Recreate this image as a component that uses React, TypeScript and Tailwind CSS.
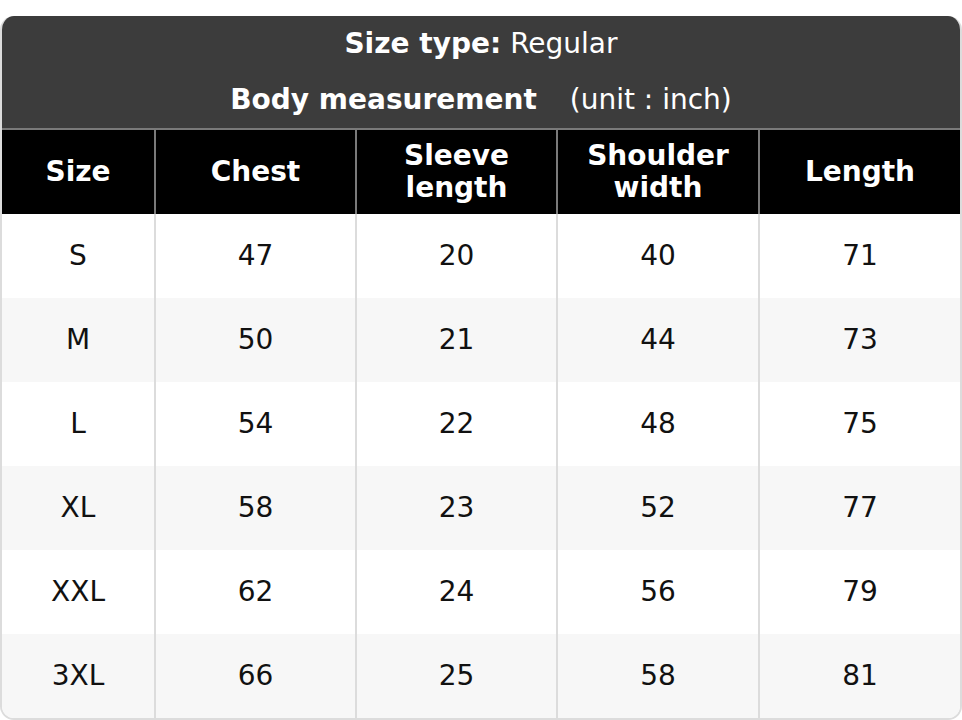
import React from "react";

const rows = [
  ["S", "47", "20", "40", "71"],
  ["M", "50", "21", "44", "73"],
  ["L", "54", "22", "48", "75"],
  ["XL", "58", "23", "52", "77"],
  ["XXL", "62", "24", "56", "79"],
  ["3XL", "66", "25", "58", "81"],
];

const widths = ["w-[152px]", "w-[201px]", "w-[201px]", "w-[202px]", "flex-1"];

export default function App() {
  return (
    <div
      className="w-[962px] h-[720px] bg-white pt-4"
      style={{ fontFamily: '"DejaVu Sans", Verdana, sans-serif' }}
    >
      <div className="rounded-[14px] overflow-hidden border-x-2 border-b-2 border-[#dcdcdc]">
        <div className="h-[112px] bg-[#3c3c3c] text-white text-[28px] flex flex-col items-center">
          <div className="h-[56px] flex items-center">
            <span className="font-bold">Size type:</span>
            <span className="ml-[9px]">Regular</span>
          </div>
          <div className="h-[56px] flex items-center">
            <span className="font-bold">Body measurement</span>
            <span className="ml-[33px]">(unit : inch)</span>
          </div>
        </div>
        <div className="h-[2px] bg-[#7a7a7a]" />
        <div className="flex h-[84px] bg-black text-white font-bold text-[28px] leading-[32px] text-center">
          {[["Size"], ["Chest"], ["Sleeve", "length"], ["Shoulder", "width"], ["Length"]].map(
            (h, i) => (
              <div
                key={i}
                className={`${widths[i]} flex flex-col items-center justify-center ${
                  i > 0 ? "border-l-2 border-[#7a7a7a]" : ""
                }`}
              >
                {h.map((t) => (
                  <div key={t}>{t}</div>
                ))}
              </div>
            )
          )}
        </div>
        {rows.map((r, ri) => (
          <div
            key={ri}
            className={`flex h-[84px] text-[28px] text-[#111] ${
              ri % 2 === 1 ? "bg-[#f7f7f7]" : "bg-white"
            }`}
          >
            {r.map((c, ci) => (
              <div
                key={ci}
                className={`${widths[ci]} flex items-center justify-center ${
                  ci > 0 ? "border-l-2 border-[#dcdcdc]" : ""
                }`}
              >
                {c}
              </div>
            ))}
          </div>
        ))}
      </div>
    </div>
  );
}
